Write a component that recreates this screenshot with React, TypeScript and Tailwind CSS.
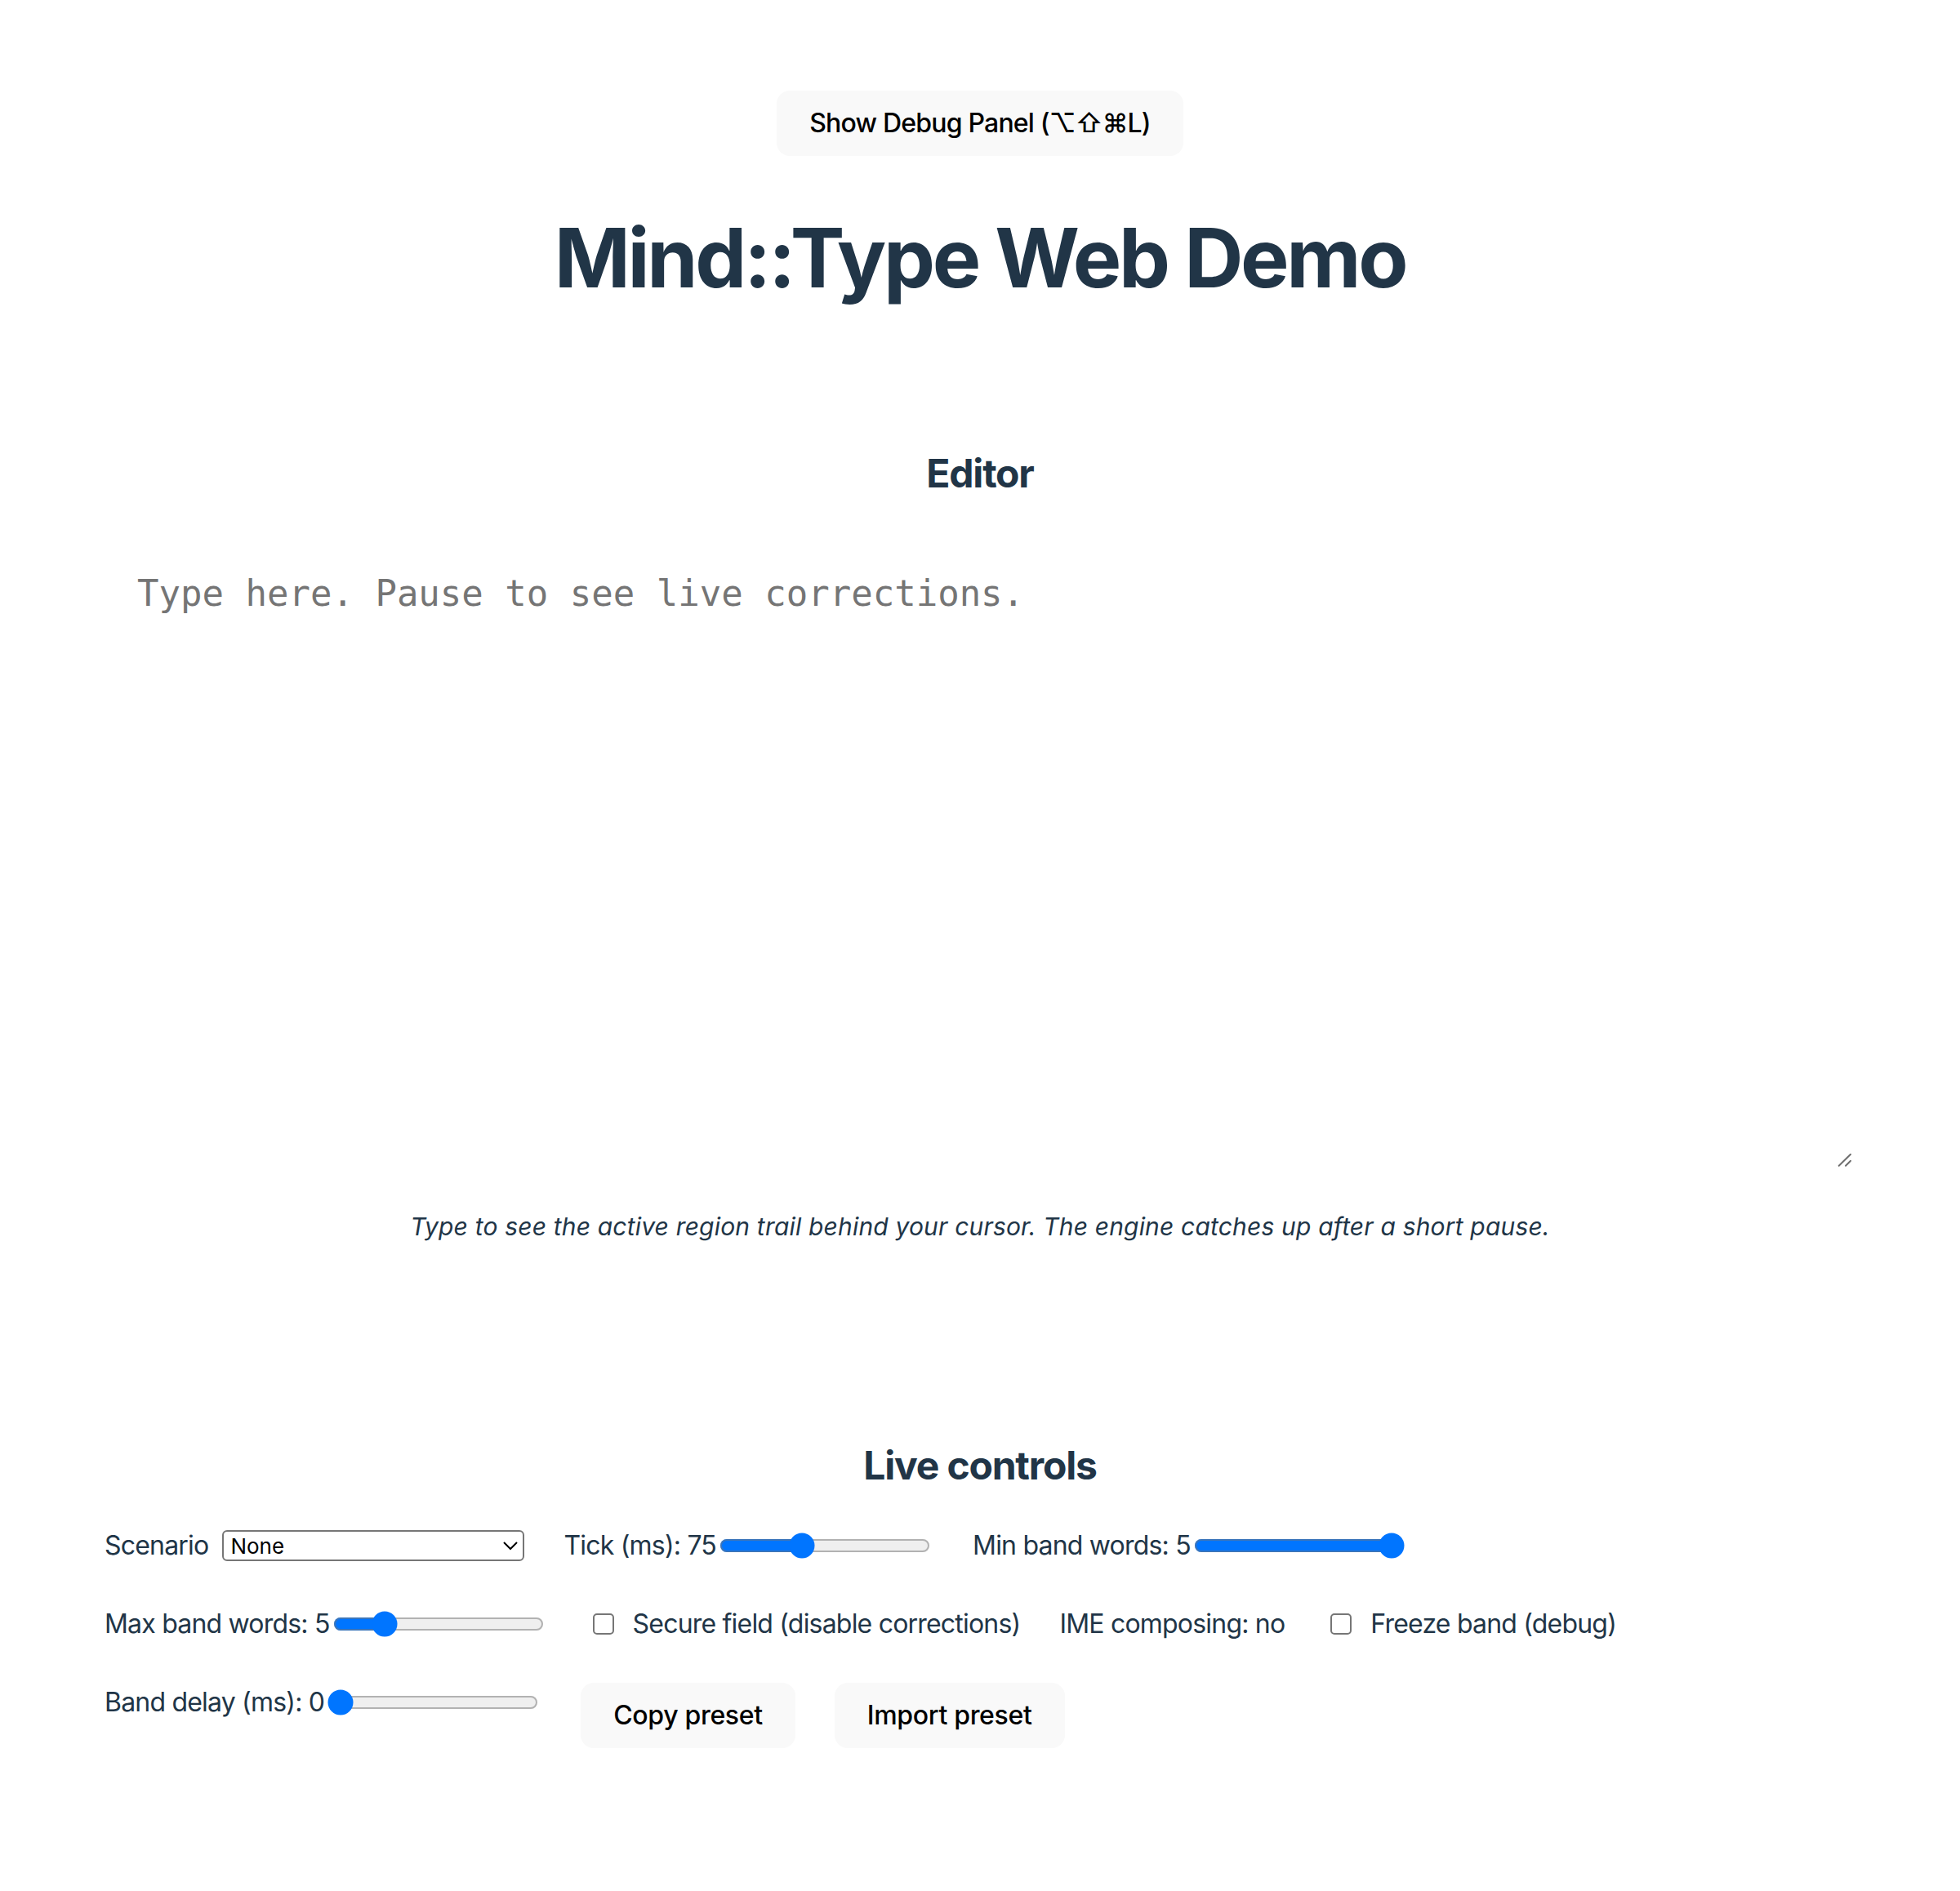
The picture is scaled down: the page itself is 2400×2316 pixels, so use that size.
import { useState } from "react";

const HINT =
  "Type to see the active region trail behind your cursor. The engine catches up after a short pause.";

const buttonClass =
  "rounded-[16px] border-2 border-transparent bg-[#f9f9f9] px-[38px] py-[19px] text-[32px] font-medium leading-[38px] text-black";

export default function App() {
  const [text, setText] = useState("");
  const [scenario, setScenario] = useState("none");
  const [tickMs, setTickMs] = useState(75);
  const [minBand, setMinBand] = useState(5);
  const [maxBand, setMaxBand] = useState(5);
  const [bandDelay, setBandDelay] = useState(0);
  const [secure, setSecure] = useState(false);
  const [freeze, setFreeze] = useState(false);

  return (
    <div className="min-h-screen bg-white font-['Inter','Noto_Sans','DejaVu_Sans',sans-serif] text-[#213547] antialiased">
      <div className="px-[128px] pt-[111px] pb-[120px] text-center">
        <div className="flex justify-center">
          <button className={`${buttonClass} tracking-[-0.025em]`}>
            Show Debug Panel (⌥⇧⌘L)
          </button>
        </div>

        <h1 className="mt-[70px] text-[100px] font-bold leading-[1.1] tracking-[-0.033em]">
          Mind::Type Web Demo
        </h1>

        <section className="mt-[180px]">
          <h2 className="text-[48px] font-bold leading-[58px] tracking-[-0.025em]">Editor</h2>
          <div className="relative mt-[45px]">
            <textarea
              value={text}
              onChange={(e) => setText(e.target.value)}
              placeholder="Type here. Pause to see live corrections."
              className="block h-[390px] w-full resize-none bg-white p-[20px] font-['DejaVu_Sans_Mono','Liberation_Mono',monospace] text-[22px] text-[#213547] outline-none placeholder:text-[#757575] [zoom:2]"
            />
            {/* resize grip */}
            <svg
              className="pointer-events-none absolute right-0 bottom-0 h-[30px] w-[30px]"
              viewBox="0 0 30 30"
            >
              <path
                d="M9.7 23.7 L24 9.7 M18 23.7 L24 17.7"
                stroke="#6e6e6e"
                strokeWidth="2"
                strokeLinecap="round"
                fill="none"
              />
            </svg>
          </div>
          <p className="mt-[47px] text-[30px] italic leading-[42px] tracking-[0.006em]">{HINT}</p>
        </section>

        <section className="mt-[243px]">
          <h2 className="text-[48px] font-bold leading-[58px] tracking-[-0.025em]">
            Live controls
          </h2>

          <div className="mt-[45px] flex flex-wrap items-start gap-[48px] text-left text-[32px] leading-[48px] tracking-[-0.025em]">
            <label className="flex items-center">
              <span>Scenario</span>
              <select
                value={scenario}
                onChange={(e) => setScenario(e.target.value)}
                className="ml-[8.5px] h-[19px] w-[185px] rounded-[3px] border border-[#767676] bg-white text-[13px] leading-normal tracking-normal text-black [zoom:2]"
              >
                <option value="none">None</option>
                <option value="typos">Typos</option>
                <option value="punct">Punctuation</option>
              </select>
            </label>

            <label className="flex items-center">
              <span>Tick (ms): {tickMs}</span>
              <input
                type="range"
                min={0}
                max={200}
                value={tickMs}
                onChange={(e) => setTickMs(Number(e.target.value))}
                className="m-[2px] [zoom:2]"
              />
            </label>

            <label className="flex items-center">
              <span>Min band words: {minBand}</span>
              <input
                type="range"
                min={1}
                max={5}
                value={minBand}
                onChange={(e) => setMinBand(Number(e.target.value))}
                className="m-[2px] [zoom:2]"
              />
            </label>

            <label className="flex items-center">
              <span>Max band words: {maxBand}</span>
              <input
                type="range"
                min={1}
                max={20}
                value={maxBand}
                onChange={(e) => setMaxBand(Number(e.target.value))}
                className="m-[2px] [zoom:2]"
              />
            </label>

            <label className="flex items-center">
              <input
                type="checkbox"
                checked={secure}
                onChange={(e) => setSecure(e.target.checked)}
                className="my-[3px] ml-[4px] mr-[3px] [zoom:2]"
              />
              <span className="ml-[17px]">Secure field (disable corrections)</span>
            </label>

            <span>IME composing: no</span>

            <label className="flex items-center">
              <input
                type="checkbox"
                checked={freeze}
                onChange={(e) => setFreeze(e.target.checked)}
                className="my-[3px] ml-[4px] mr-[3px] [zoom:2]"
              />
              <span className="ml-[17px]">Freeze band (debug)</span>
            </label>

            <label className="flex items-center">
              <span>Band delay (ms): {bandDelay}</span>
              <input
                type="range"
                min={0}
                max={1000}
                value={bandDelay}
                onChange={(e) => setBandDelay(Number(e.target.value))}
                className="m-[2px] [zoom:2]"
              />
            </label>

            <button className={`${buttonClass} tracking-[-0.01em]`}>Copy preset</button>
            <button className={`${buttonClass} tracking-[-0.01em]`}>Import preset</button>
          </div>
        </section>
      </div>
    </div>
  );
}
